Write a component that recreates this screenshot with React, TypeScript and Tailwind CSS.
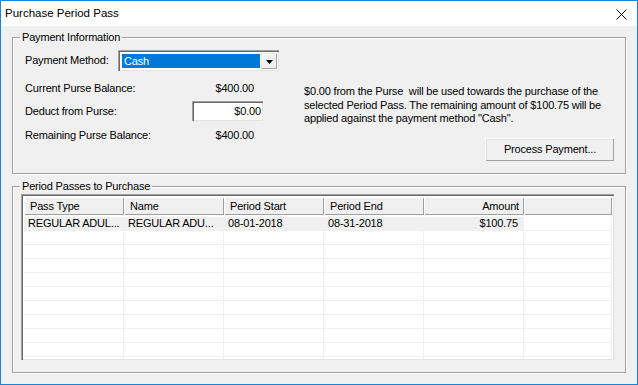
import React from 'react';

const columns = [
  { title: 'Pass Type', w: 'w-[100px]' },
  { title: 'Name', w: 'w-[100px]' },
  { title: 'Period Start', w: 'w-[100px]' },
  { title: 'Period End', w: 'w-[100px]' },
  { title: 'Amount', w: 'w-[100px]', right: true },
  { title: '', w: 'flex-1' },
];

const passes = [['REGULAR ADUL...', 'REGULAR ADU...', '08-01-2018', '08-31-2018', '$100.75', '']];

const GroupBox: React.FC<{ label: string; className?: string; children: React.ReactNode }> = ({ label, className, children }) => (
  <div className={`relative border border-[#a0a0a0] shadow-[inset_1px_1px_0_#fff,1px_1px_0_#fff] ${className ?? ''}`}>
    <span className="absolute left-[7px] top-[-7px] bg-[#f0f0f0] px-[2px] leading-[13px]">{label}</span>
    {children}
  </div>
);

export default function App() {
  const emptyRows = Array.from({ length: 10 });

  return (
    <div className="w-[638px] h-[385px] border border-[#1883d7] bg-[#f0f0f0] flex flex-col text-[11px] tracking-[-0.18px] text-black font-['Liberation_Sans',Arial,sans-serif] overflow-hidden">
      {/* Title bar */}
      <div className="h-[25px] bg-white flex items-center justify-between pl-[4px] pr-[10px]">
        <span className="text-[11.5px] tracking-normal">Purchase Period Pass</span>
        <svg width="11" height="11" viewBox="0 0 11 11" className="mt-[1px]">
          <path d="M0.5 0.5 L10.5 10.5 M10.5 0.5 L0.5 10.5" stroke="#000" strokeWidth="1" />
        </svg>
      </div>

      <div className="flex flex-col px-[11px] pt-[11px]">
        {/* Payment Information */}
        <GroupBox label="Payment Information" className="h-[137px] pl-[12px] pt-[12px] pr-[11px]">
          <div className="flex items-center h-[21px]">
            <span className="w-[93px]">Payment Method:</span>
            <div className="w-[161px] h-[21px] border-t border-l border-[#a0a0a0] border-r-white border-b-white shadow-[inset_1px_1px_0_#696969,inset_-1px_-1px_0_#e3e3e3] p-[2px] bg-white flex">
              <div className="flex-1 my-[1px] ml-[1px] bg-[#0078d7] text-white pl-[2px] leading-[15px]">Cash</div>
              <div className="w-[16px] ml-[1px] bg-[#f0f0f0] border-t border-l border-[#e3e3e3] border-r-[#696969] border-b-[#696969] shadow-[inset_-1px_-1px_0_#a0a0a0,inset_1px_1px_0_#fff] flex items-center justify-center">
                <svg width="7" height="4" viewBox="0 0 7 4">
                  <path d="M0 0 H7 L3.5 4 Z" fill="#000" />
                </svg>
              </div>
            </div>
          </div>

          <div className="flex">
            <div className="w-[279px] flex flex-col">
              <div className="h-[16px] mt-[9px] flex items-center justify-between w-[229px]">
                <span>Current Purse Balance:</span>
                <span>$400.00</span>
              </div>
              <div className="h-[20px] mt-[5px] flex items-center">
                <span className="w-[167px]">Deduct from Purse:</span>
                <div className="w-[71px] h-[20px] bg-white border-t border-l border-[#a0a0a0] border-r-white border-b-white shadow-[inset_1px_1px_0_#696969,inset_-1px_-1px_0_#e3e3e3] text-right pr-[2px] leading-[18px]">
                  $0.00
                </div>
              </div>
              <div className="h-[16px] mt-[6px] flex items-center justify-between w-[229px]">
                <span>Remaining Purse Balance:</span>
                <span>$400.00</span>
              </div>
            </div>

            <div className="flex-1 flex flex-col">
              <p className="mt-[14px] leading-[13.5px] whitespace-pre">
                {'$0.00 from the Purse  will be used towards the purchase of the\nselected Period Pass. The remaining amount of $100.75 will be\napplied against the payment method "Cash".'}
              </p>
              <button className="self-end mt-[12px] w-[129px] h-[23px] bg-[#f0f0f0] border-t border-l border-white border-r-[#696969] border-b-[#696969] shadow-[inset_-1px_-1px_0_#a0a0a0,inset_1px_1px_0_#e3e3e3]">
                Process Payment...
              </button>
            </div>
          </div>
        </GroupBox>

        {/* Period Passes to Purchase */}
        <GroupBox label="Period Passes to Purchase" className="h-[187px] mt-[12px] pl-[8px] pt-[7px] pr-[11px]">
          <div className="h-[166px] border-t border-l border-[#a0a0a0] border-r-white border-b-white shadow-[inset_1px_1px_0_#696969,inset_-1px_-1px_0_#e3e3e3] p-[2px] bg-white overflow-hidden flex flex-col">
            <div className="flex h-[18px] shrink-0">
              {columns.map((c, i) => (
                <div
                  key={i}
                  className={`${c.w} h-full bg-[#f0f0f0] border-t border-l border-white border-r-[#696969] border-b-[#696969] shadow-[inset_-1px_-1px_0_#a0a0a0] flex items-center ${c.right ? 'justify-end pr-[5px]' : 'pl-[5px]'}`}
                >
                  {c.title}
                </div>
              ))}
            </div>
            <div className="pt-[2px] flex flex-col">
              {passes.map((r, ri) => (
                <div key={ri} className="flex h-[14px] shrink-0">
                  {r.map((cell, ci) => (
                    <div
                      key={ci}
                      className={`${columns[ci].w} h-full border-r border-b border-[#f0f0f0] flex items-center leading-[13px] ${ci < 5 ? 'bg-[#f0f0f0]' : ''} ${columns[ci].right ? 'justify-end pr-[5px]' : 'pl-[4px]'}`}
                    >
                      {cell}
                    </div>
                  ))}
                </div>
              ))}
              {emptyRows.map((_, ri) => (
                <div key={ri} className="flex h-[14px] shrink-0">
                  {columns.map((c, ci) => (
                    <div key={ci} className={`${c.w} h-full border-r border-b border-[#f0f0f0]`} />
                  ))}
                </div>
              ))}
            </div>
          </div>
        </GroupBox>
      </div>
    </div>
  );
}
